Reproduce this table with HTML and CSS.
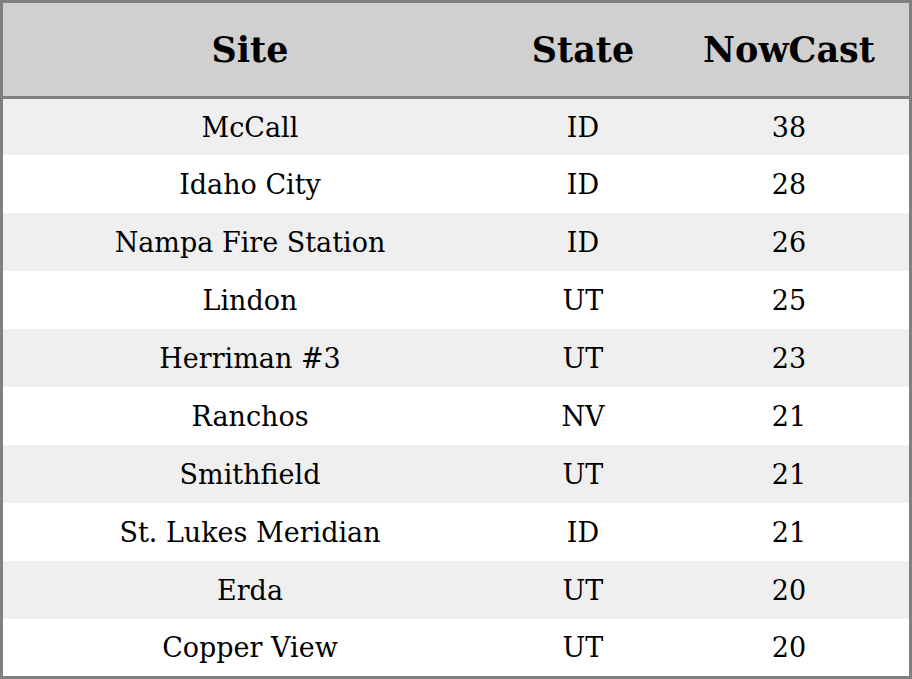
FILE: index.html
```html
<!DOCTYPE html>
<html>
<head>
<meta charset="utf-8">
<link rel="stylesheet" href="styles.css">
</head>
<body>
<table class="aq">
  <thead>
    <tr><th class="c-site">Site</th><th class="c-state">State</th><th class="c-now">NowCast</th></tr>
  </thead>
  <tbody>
    <tr><td>McCall</td><td>ID</td><td>38</td></tr>
    <tr><td>Idaho City</td><td>ID</td><td>28</td></tr>
    <tr><td>Nampa Fire Station</td><td>ID</td><td>26</td></tr>
    <tr><td>Lindon</td><td>UT</td><td>25</td></tr>
    <tr><td>Herriman #3</td><td>UT</td><td>23</td></tr>
    <tr><td>Ranchos</td><td>NV</td><td>21</td></tr>
    <tr><td>Smithfield</td><td>UT</td><td>21</td></tr>
    <tr><td>St. Lukes Meridian</td><td>ID</td><td>21</td></tr>
    <tr><td>Erda</td><td>UT</td><td>20</td></tr>
    <tr><td>Copper View</td><td>UT</td><td>20</td></tr>
  </tbody>
</table>
</body>
</html>
```
FILE: styles.css
```css
html, body {
  margin: 0;
  padding: 0;
  background: #ffffff;
}
.aq {
  width: 912px;
  height: 679px;
  border: 3px solid #808080;
  border-spacing: 0;
  border-collapse: separate;
  font-family: "DejaVu Serif", serif;
  color: #000;
  table-layout: fixed;
  box-sizing: border-box;
}
.aq th {
  height: 93px;
  padding: 0;
  background: #d0d0d0;
  border-bottom: 3px solid #808080;
  font-size: 35px;
  font-weight: bold;
  text-align: center;
  box-sizing: content-box;
}
.c-site { width: 494px; }
.c-state { width: 172px; }
.c-now { width: 240px; }
.aq td {
  padding: 0;
  height: 58px;
  font-size: 27px;
  text-align: center;
}
.aq tbody tr:first-child td { height: 56px; }
.aq tbody tr:last-child td { height: 57px; }
.aq tbody tr:nth-child(odd) td { background: #efefef; }
.aq tbody tr:nth-child(even) td { background: #ffffff; }
```
